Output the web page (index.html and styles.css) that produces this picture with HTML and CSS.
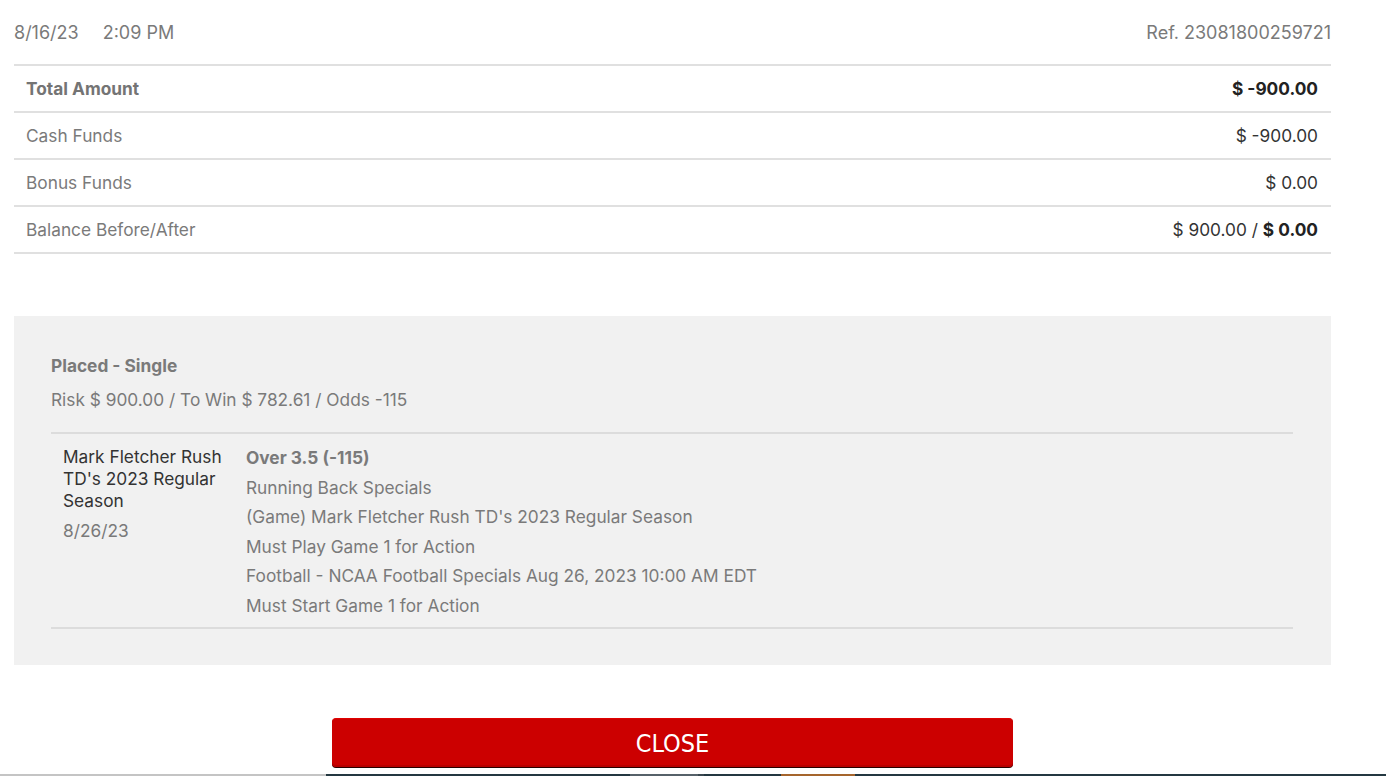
FILE: index.html
```html
<!DOCTYPE html>
<html>
<head>
<meta charset="utf-8">
<link rel="stylesheet" href="styles.css">
</head>
<body>
<div class="page">
  <div class="meta">
    <div class="when"><span>8/16/23</span><span class="time">2:09 PM</span></div>
    <div class="ref">Ref. 23081800259721</div>
  </div>
  <div class="summary">
    <div class="row total"><span class="label">Total Amount</span><span class="value strong">$ -900.00</span></div>
    <div class="row"><span class="label">Cash Funds</span><span class="value">$ -900.00</span></div>
    <div class="row"><span class="label">Bonus Funds</span><span class="value">$ 0.00</span></div>
    <div class="row"><span class="label">Balance Before/After</span><span class="value">$ 900.00 / <b class="strong">$ 0.00</b></span></div>
  </div>
  <div class="bet">
    <div class="bet-title">Placed - Single</div>
    <div class="bet-sub">Risk $ 900.00 / To Win $ 782.61 / Odds -115</div>
    <div class="leg">
      <div class="leg-event">
        <div class="event-name">Mark Fletcher Rush TD's 2023 Regular Season</div>
        <div class="event-date">8/26/23</div>
      </div>
      <div class="leg-info">
        <div class="pick">Over 3.5 (-115)</div>
        <div>Running Back Specials</div>
        <div>(Game) Mark Fletcher Rush TD's 2023 Regular Season</div>
        <div>Must Play Game 1 for Action</div>
        <div>Football - NCAA Football Specials Aug 26, 2023 10:00 AM EDT</div>
        <div>Must Start Game 1 for Action</div>
      </div>
    </div>
  </div>
  <div class="actions">
    <button class="close-btn">CLOSE</button>
  </div>
</div>
<div class="strip">
  <span class="seg s1"></span><span class="seg s2"></span><span class="seg s3"></span><span class="seg s4"></span><span class="seg s5"></span><span class="seg s6"></span><span class="seg s7"></span>
</div>
</body>
</html>
```
FILE: styles.css
```css
html, body {
  margin: 0;
  padding: 0;
  background: #ffffff;
}
body {
  font-family: Inter, "Noto Sans", sans-serif;
  font-size: 17.3px;
  color: #7a7a7a;
}
.page {
  width: 1317px;
  margin-left: 14px;
}
.meta {
  height: 64px;
  display: flex;
  align-items: center;
  justify-content: space-between;
  font-size: 18px;
}
.time {
  margin-left: 24px;
}
.summary {
  border-top: 2px solid #e0e0e0;
}
.row {
  height: 45px;
  border-bottom: 2px solid #e0e0e0;
  display: flex;
  align-items: center;
  justify-content: space-between;
  padding: 0 13px 0 12px;
}
.value {
  color: #333333;
}
.strong {
  font-weight: 700;
  color: #222222;
}
.total .label {
  font-weight: 700;
  color: #747474;
}
.bet {
  margin-top: 62px;
  background: #f1f1f1;
  padding: 38px 38px 36px 37px;
}
.bet-title {
  font-weight: 700;
  line-height: 24px;
  color: #7a7a7a;
}
.bet-sub {
  margin-top: 10px;
  line-height: 24px;
}
.leg {
  margin-top: 20px;
  border-top: 2px solid #dcdcdc;
  border-bottom: 2px solid #dcdcdc;
  display: flex;
  padding: 9px 0 7px 0;
}
.leg-event {
  width: 175px;
  flex: none;
  padding: 3px 8px 0 12px;
}
.event-name {
  line-height: 22px;
  color: #333333;
}
.event-date {
  margin-top: 8px;
  line-height: 22px;
}
.leg-info {
  line-height: 29.5px;
}
.pick {
  font-weight: 700;
}
.actions {
  margin-top: 53px;
  display: flex;
  justify-content: center;
}
.close-btn {
  width: 681px;
  height: 49px;
  background: #cc0000;
  border: none;
  border-top: 1px solid #e00000;
  border-radius: 4px;
  box-shadow: 0 1px 0 #2a0000, inset 0 -2px 0 #b80000;
  color: #ffffff;
  font-family: "Liberation Sans Narrow", "DejaVu Sans Condensed", Roboto, sans-serif;
  font-size: 25px;
  padding: 0;
  cursor: pointer;
}
.strip {
  margin-top: 7px;
  display: flex;
  height: 2px;
}
.seg {
  height: 2px;
  display: block;
}
.s1 { width: 326px; background: #c4c4c4; }
.s2 { width: 304px; background: #243841; }
.s3 { width: 68px; background: #566169; }
.s4 { width: 6px; background: #3a4850; }
.s5 { width: 77px; background: #243841; }
.s6 { width: 74px; background: #a5652d; }
.s7 { flex: 1; background: #243841; }
```
